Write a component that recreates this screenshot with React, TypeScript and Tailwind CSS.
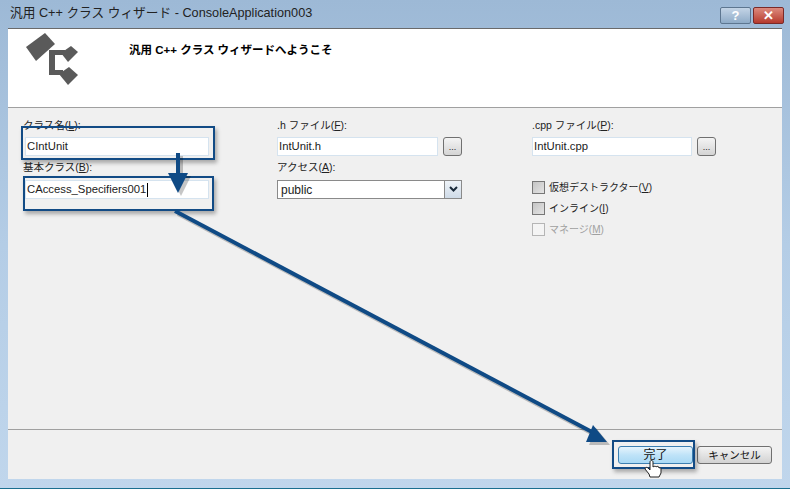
const font = "font-['Liberation_Sans','Noto_Sans_CJK_JP',sans-serif]";

const Field = ({ value, width, caret }: { value: string; width: string; caret?: boolean }) => (
  <div className={`${width} flex h-[19px] items-center border border-[#d5e3ef] bg-white pl-px text-[11.3px] leading-none text-[#222]`}>
    {value}
    {caret && <span className="ml-px h-[14px] w-px bg-black" />}
  </div>
);

const Browse = () => (
  <div className="flex h-[19px] w-[19px] items-end justify-center rounded-[3px] border border-[#707070] bg-gradient-to-b from-[#f4f4f4] to-[#d4d4d4] pb-[3px] text-[9px] leading-none text-[#222]">
    ...
  </div>
);

const Label = ({ before, mark, after = '):' }: { before: string; mark: string; after?: string }) => (
  <div className="h-[13px] text-[10.5px] leading-[13px] whitespace-nowrap text-[#222]">
    {before}
    <span className="underline">{mark}</span>
    {after}
  </div>
);

const Check = ({ before, mark, disabled }: { before: string; mark: string; disabled?: boolean }) => (
  <div className={`flex h-[13px] items-center gap-[4px] text-[10px] whitespace-nowrap ${disabled ? 'text-[#a0a0a0]' : 'text-[#222]'}`}>
    <span className={`h-[13px] w-[13px] border ${disabled ? 'border-[#b5b5b5] bg-[#f4f4f4]' : 'border-[#777] bg-gradient-to-br from-[#c4c4c4] to-[#e4e4e4]'}`} />
    <span>
      {before}(<span className="underline">{mark}</span>)
    </span>
  </div>
);

const DialogButton = ({ label, active }: { label: string; active?: boolean }) => (
  <div
    className={`flex h-[18px] w-[75px] items-center justify-center rounded-[3px] border leading-none text-[#111] ${
      active
        ? 'border-[#3c7fb1] bg-gradient-to-b from-[#e6f4fc] via-[#bfe3f8] to-[#a9d9f5] text-[12px]'
        : 'border-[#707070] bg-gradient-to-b from-[#f4f4f4] to-[#d2d2d2] text-[10.5px]'
    }`}
  >
    {label}
  </div>
);

const Annotations = () => (
  <>
    <div className="absolute top-[126px] left-[21px] h-[34px] w-[194px] border-[2px] border-[#124b85] shadow-[2px_3px_4px_rgba(0,0,0,0.3)]" />
    <div className="absolute top-[176px] left-[23px] h-[35px] w-[191px] border-[2px] border-[#124b85] shadow-[2px_3px_4px_rgba(0,0,0,0.3)]" />
    <div className="absolute top-[440px] left-[612px] h-[29px] w-[83px] border-[2px] border-[#124b85] shadow-[2px_3px_4px_rgba(0,0,0,0.3)]" />
    <svg className="absolute top-0 left-0" width="790" height="489" viewBox="0 0 790 489">
      <g opacity="0.22" transform="translate(3 3)">
        <path d="M176 153h4v20h8l-10 20-10-20h8z" fill="#000" />
        <path d="M175 211L592 432" stroke="#000" strokeWidth="4" fill="none" />
        <path d="M593 425l14 17h-21z" fill="#000" />
      </g>
      <path d="M176 153h4v20h8l-10 20-10-20h8z" fill="#0f4a85" />
      <path d="M175 211L592 432" stroke="#0f4a85" strokeWidth="4" fill="none" />
      <path d="M593 425l14 17h-21z" fill="#0f4a85" />
      <path
        d="M650 462c0-2 3-2 3 0v5c1-1 3-1 3 0 1-1 3-1 3 1 1-.5 2 0 2 1v4l-2 4h-9l-1-3-4-5c0-2 2-2 3-1l2 2z"
        fill="#fff"
        stroke="#222"
        strokeWidth="1"
      />
    </svg>
  </>
);

export default function App() {
  return (
    <div className={`relative flex h-[489px] w-[790px] flex-col overflow-hidden bg-gradient-to-b from-[#9db9d6] via-[#b4cde6] to-[#c0d6ec] ${font}`}>
      <div className="flex h-[28px] shrink-0 items-center justify-between pr-[6px] pl-[10px]">
        <span className="text-[12.7px] text-[#222]">汎用 C++ クラス ウィザード - ConsoleApplication003</span>
        <div className="mt-[3px] flex gap-[2px]">
          <div className="flex h-[17px] w-[31px] items-center justify-center rounded-[2px] border border-[#5d7690] bg-gradient-to-b from-[#c3d4e6] to-[#8fabc7] text-[13px] font-bold text-white">
            ?
          </div>
          <div className="flex h-[17px] w-[31px] items-center justify-center rounded-[2px] border border-[#7a2a28] bg-gradient-to-b from-[#dc8a7e] to-[#b5382c] text-[13px] font-bold text-white">
            ✕
          </div>
        </div>
      </div>

      <div className="mx-[8px] flex h-[451px] flex-col border-t-[1px] border-[#6a6a6a] bg-[#f0f0f0]">
        <div className="flex h-[79px] shrink-0 border-b border-[#a0a0a0] bg-white">
          <svg className="mt-[1px] ml-[17px] shrink-0" width="55" height="57" viewBox="0 0 55 57">
            <path d="M1 17L20 3l10 11-19 17z" fill="#5a5a5a" />
            <path d="M24 20h16v5H30v15h8v5H24z" fill="#5a5a5a" />
            <path d="M36 23l10-7 7 6-10 10z" fill="#5a5a5a" />
            <path d="M34 44l10-7 9 8-10 10z" fill="#5a5a5a" />
          </svg>
          <div className="mt-[14px] ml-[49px] text-[11.5px] leading-[14px] font-bold text-black">汎用 C++ クラス ウィザードへようこそ</div>
        </div>

        <div className="flex h-[322px] shrink-0 border-b border-[#a0a0a0] pt-[11px]">
          <div className="ml-[15px] flex w-[254px] shrink-0 flex-col">
            <Label before="クラス名(" mark="L" />
            <div className="mt-[5px] ml-[2px]">
              <Field value="CIntUnit" width="w-[184px]" />
            </div>
            <div className="mt-[5px]">
              <Label before="基本クラス(" mark="B" />
            </div>
            <div className="mt-[6px] ml-[2px]">
              <Field value="CAccess_Specifiers001" width="w-[184px]" caret />
            </div>
          </div>

          <div className="flex w-[255px] shrink-0 flex-col">
            <Label before=".h ファイル(" mark="F" />
            <div className="mt-[5px] flex gap-[5px]">
              <Field value="IntUnit.h" width="w-[161px]" />
              <Browse />
            </div>
            <div className="mt-[5px]">
              <Label before="アクセス(" mark="A" />
            </div>
            <div className="mt-[6px] flex h-[19px] w-[185px] items-center justify-between border border-[#8a8a8a] bg-white pl-[3px] text-[12px] text-[#222]">
              public
              <span className="flex h-full w-[17px] items-center justify-center border-l border-[#8a8a8a] bg-gradient-to-b from-[#eef3f8] to-[#cfdbe8]">
                <svg width="9" height="7" viewBox="0 0 9 7">
                  <path d="M1 1l3.500 3.500L8 1" fill="none" stroke="#1a2a3a" strokeWidth="2" />
                </svg>
              </span>
            </div>
          </div>

          <div className="flex flex-col">
            <Label before=".cpp ファイル(" mark="P" />
            <div className="mt-[5px] flex gap-[5px]">
              <Field value="IntUnit.cpp" width="w-[160px]" />
              <Browse />
            </div>
            <div className="mt-[25px] flex flex-col gap-[8px]">
              <Check before="仮想デストラクター" mark="V" />
              <Check before="インライン" mark="I" />
              <Check before="マネージ" mark="M" disabled />
            </div>
          </div>
        </div>

        <div className="flex justify-end gap-[4px] pt-[16px] pr-[10px]">
          <DialogButton label="完了" active />
          <DialogButton label="キャンセル" />
        </div>
      </div>
      <div className="mt-auto h-[1px] bg-[#1a6f8f]" />
      <Annotations />
    </div>
  );
}
